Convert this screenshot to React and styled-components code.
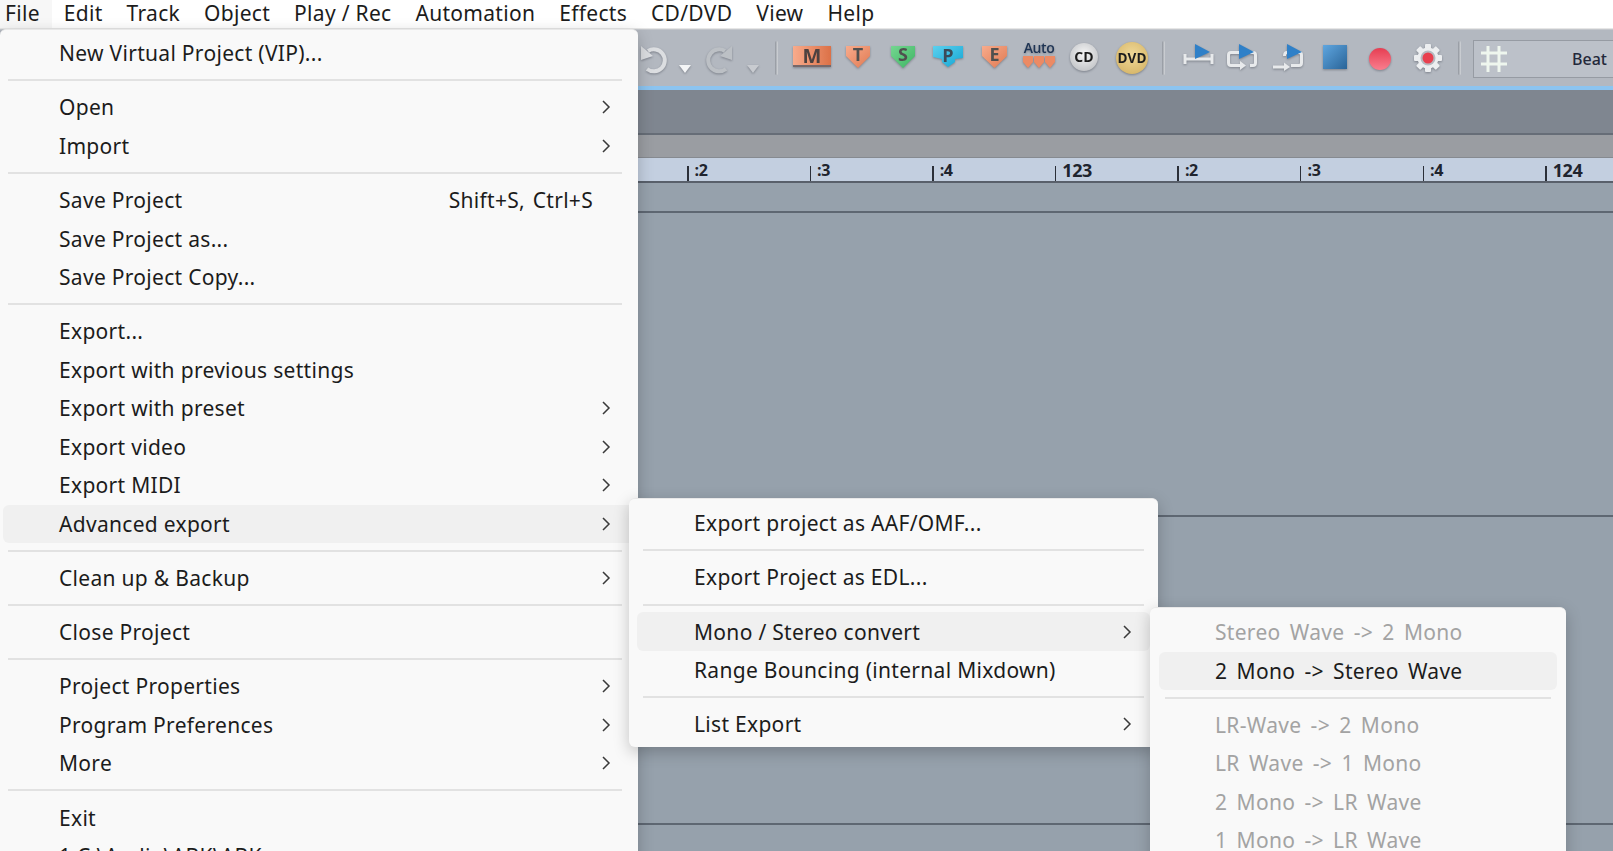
import React from 'react'
import styled, { createGlobalStyle } from 'styled-components'

const GlobalStyle = createGlobalStyle`
  html, body { margin: 0; padding: 0; background: #fff; }
  #root { height: 851px; overflow: hidden; }
`

const Page = styled.div`
  position: relative;
  width: 1613px;
  height: 851px;
  overflow: hidden;
  font-family: "Noto Sans", "Open Sans", sans-serif;
  color: #1c1c1c;
`

const MenuBar = styled.div`
  display: flex;
  height: 29px;
  background: #fff;
  border-bottom: 1px solid #e6e6e6;
  box-sizing: border-box;
`

const BarItem = styled.div`
  height: 28px;
  line-height: 26px;
  padding: 0 12px 0 ${p => (p.$open ? 5 : 12)}px;
  font-size: 21px;
  letter-spacing: 0.3px;
  background: ${p => (p.$open ? '#f7f7f7' : 'transparent')};
`

const Toolbar = styled.div`
  display: flex;
  align-items: flex-start;
  height: 57px;
  padding-left: 640px;
  background: #b3b8c0;
  border-top: 1px solid #c4c7cc;
  box-sizing: border-box;
`

// $y is the distance below the toolbar's top edge
const Tool = styled.div`
  flex: none;
  display: flex;
  margin-left: ${p => p.$ml || 0}px;
  margin-top: ${p => p.$y}px;
  filter: drop-shadow(0 1px 1px rgba(60, 65, 75, 0.45));
`

const ToolSep = styled.div`
  flex: none;
  width: 3px;
  height: 34px;
  margin-left: ${p => p.$ml}px;
  margin-top: 11px;
  border-radius: 2px;
  background: linear-gradient(90deg, #8f949c, #d4d7db);
`

const SnapBox = styled.div`
  flex: none;
  display: flex;
  align-items: center;
  justify-content: space-between;
  width: 160px;
  height: 38px;
  margin-left: 12px;
  margin-top: 10px;
  padding: 0 25px 0 6px;
  box-sizing: border-box;
  background: #bcc1c9;
  border: 1px solid #969ba3;
  font-size: 16px;
  font-weight: 500;
  color: #23283a;
`

const BlueLine = styled.div`
  height: 4px;
  background: #8cc4f0;
`

const DarkBand = styled.div`
  height: 45px;
  box-sizing: border-box;
  background: #7f8690;
  border-bottom: 2px solid #666d77;
`

const GreyBand = styled.div`
  height: 23px;
  box-sizing: border-box;
  background: #9a9da2;
  border-bottom: 1px solid #868a90;
`

const Ruler = styled.div`
  display: flex;
  height: 25px;
  padding-left: 687px;
  box-sizing: border-box;
  background: #c3cfe0;
  border-bottom: 2px solid #59606b;
`

const Bar = styled.div`
  flex: none;
  width: 122.6px;
  display: flex;
  align-items: flex-end;
`

const Tick = styled.div`
  width: 1.5px;
  height: 15px;
  background: #2b2f38;
`

const BarLabel = styled.span`
  margin-left: 6px;
  margin-bottom: -1px;
  line-height: 23px;
  font-family: "Open Sans", sans-serif;
  font-size: ${p => (p.$major ? 18 : 16)}px;
  font-weight: 700;
  letter-spacing: -0.4px;
  color: #20242e;
`

const Track = styled.div`
  height: ${p => p.$h}px;
  box-sizing: border-box;
  background: #96a1ac;
  border-bottom: 2px solid #5e6772;
`

const Menu = styled.div`
  position: absolute;
  left: ${p => p.$left}px;
  top: ${p => p.$top}px;
  width: ${p => p.$width}px;
  padding: ${p => p.$padTop}px 0 3px;
  box-sizing: border-box;
  background: #f9f9f9;
  border-radius: 6px;
  box-shadow: 0 5px 16px rgba(0, 0, 0, 0.22);
  border-top: 1px solid #e8e8e8;
  z-index: ${p => p.$z};
`

const Row = styled.div`
  display: flex;
  align-items: center;
  height: 38.5px;
  margin: 0 ${p => p.$inset}px;
  padding-left: ${p => p.$text}px;
  padding-right: ${p => p.$right}px;
  border-radius: 6px;
  font-size: 21px;
  letter-spacing: 0.3px;
  word-spacing: ${p => p.$wordGap || 0}px;
  white-space: nowrap;
  color: ${p => (p.$disabled ? '#a3a3a3' : '#1c1c1c')};
  background: ${p => (p.$active ? '#f0f0f0' : 'transparent')};
`

const RowLabel = styled.span`
  flex: 1;
`

const Shortcut = styled.span`
  margin-right: 18px;
  word-spacing: 2px;
`

const Sep = styled.div`
  height: 15.7px;
  display: flex;
  align-items: center;
  &::after {
    content: '';
    flex: 1;
    height: 2px;
    margin: 0 ${p => p.$right}px 0 ${p => p.$left}px;
    background: #e2e2e2;
  }
`

const Chevron = () => (
  <svg width="10" height="16" viewBox="0 0 10 16">
    <path d="M2 2 L8 8 L2 14" fill="none" stroke="#3a3a3a" strokeWidth="1.5" />
  </svg>
)

const Shield = ({ id, from, to, letter, w = 24 }) => (
  <svg width={w} height="23" viewBox={`0 0 ${w} 23`}>
    <defs>
      <linearGradient id={id} x1="0" y1="0" x2="1" y2="1">
        <stop offset="0" stopColor={from} />
        <stop offset="1" stopColor={to} />
      </linearGradient>
    </defs>
    <path d={`M0 1 H${w} V11 L${w / 2} 23 L0 11 Z`} fill={`url(#${id})`} />
    <text x={w / 2} y="16" textAnchor="middle" fontFamily="Open Sans" fontWeight="700" fontSize="18" fill="#50504f">{letter}</text>
  </svg>
)

const MuteIcon = () => (
  <svg width="38" height="22" viewBox="0 0 38 22">
    <defs>
      <linearGradient id="mute" x1="0" y1="0" x2="1" y2="0">
        <stop offset="0" stopColor="#f8ab8c" />
        <stop offset="1" stopColor="#dc7147" />
      </linearGradient>
    </defs>
    <rect x="0" y="1" width="38" height="20" fill="url(#mute)" />
    <rect x="0" y="20" width="38" height="2" fill="#76686a" />
    <text x="19" y="18" textAnchor="middle" fontFamily="Open Sans" fontWeight="700" fontSize="20" fill="#4b4140">M</text>
  </svg>
)

const PhaseIcon = () => (
  <svg width="30" height="22" viewBox="0 0 30 22">
    <defs>
      <linearGradient id="phase" x1="0" y1="0" x2="1" y2="1">
        <stop offset="0" stopColor="#5cd0ee" />
        <stop offset="1" stopColor="#14a6d4" />
      </linearGradient>
    </defs>
    <path d="M0 1 H30 V13 L22 14 V17 L15 22 L9 17 V14 L0 12 Z" fill="url(#phase)" />
    <text x="15" y="17" textAnchor="middle" fontFamily="Open Sans" fontWeight="700" fontSize="18" fill="#3c4b58">P</text>
  </svg>
)

const AutoIcon = () => (
  <svg width="34" height="27" viewBox="0 0 34 27">
    <text x="17" y="11" textAnchor="middle" fontFamily="Open Sans" fontWeight="600" fontSize="14" letterSpacing="-0.4" fill="#1e3454">Auto</text>
    {[1, 12, 23].map(x => (
      <path key={x} d={`M${x} 14 H${x + 10} V20 L${x + 5} 26 L${x} 20 Z`} fill="#ec8a64" />
    ))}
  </svg>
)

const Disc = ({ id, label, from, to, size, fontSize, color }) => (
  <svg width={size} height={size} viewBox={`0 0 ${size} ${size}`}>
    <defs>
      <radialGradient id={id} cx="0.5" cy="0.4" r="0.6">
        <stop offset="0" stopColor={from} />
        <stop offset="1" stopColor={to} />
      </radialGradient>
    </defs>
    <circle cx={size / 2} cy={size / 2} r={size / 2 - 1} fill={`url(#${id})`} />
    <text x={size / 2} y={size / 2 + fontSize * 0.36} textAnchor="middle" fontFamily="Open Sans" fontWeight="700" fontSize={fontSize} fill={color}>{label}</text>
  </svg>
)

const HistoryIcon = ({ flip, color }) => (
  <svg width="30" height="30" viewBox="0 0 30 30" style={flip ? { transform: 'scaleX(-1)' } : undefined}>
    <path d="M8 7 A11 11 0 1 1 7 25" fill="none" stroke={color} strokeWidth="4" />
    <path d="M1 2 L1 16 L13 12 Z" fill={color} />
  </svg>
)

const DropArrow = ({ color }) => (
  <svg width="12" height="8" viewBox="0 0 12 8">
    <path d="M0 0 H12 L6 8 Z" fill={color} />
  </svg>
)

const PlayFlag = ({ x }) => <path d={`M${x} 1 L${x + 15} 9 L${x} 16 Z`} fill="#2f80c8" />

const LoopA = () => (
  <svg width="32" height="26" viewBox="0 0 32 26">
    <path d="M2 11 V21 M2 16 H29 M29 11 V21" fill="none" stroke="#e8eaec" strokeWidth="3" />
    <PlayFlag x={12} />
  </svg>
)

const LoopB = () => (
  <svg width="32" height="28" viewBox="0 0 32 28">
    <path d="M14 9.5 H5 Q2.5 9.5 2.5 12 V20 Q2.5 22.5 5 22.5 H15 M24 9.5 H27 Q29.5 9.5 29.5 12 V20 Q29.5 22.5 27 22.5 H24" fill="none" stroke="#e8eaec" strokeWidth="3" />
    <path d="M14 18 L20 22.5 L14 27 Z" fill="#e8eaec" />
    <PlayFlag x={13} />
  </svg>
)

const LoopC = () => (
  <svg width="32" height="28" viewBox="0 0 32 28">
    <path d="M15 9.5 Q12.5 9.5 12.5 13 M26 9.5 H27 Q29.5 9.5 29.5 12 V20 Q29.5 22.5 27 22.5 H19 M1 24 H14" fill="none" stroke="#e8eaec" strokeWidth="3" />
    <path d="M12 19.5 L18 24 L12 28 Z" fill="#e8eaec" />
    <PlayFlag x={15} />
  </svg>
)

const StopIcon = () => (
  <svg width="24" height="24" viewBox="0 0 24 24">
    <defs>
      <linearGradient id="stop" x1="0" y1="0" x2="1" y2="1">
        <stop offset="0" stopColor="#5fa6e0" />
        <stop offset="1" stopColor="#2a6498" />
      </linearGradient>
    </defs>
    <rect width="24" height="24" fill="url(#stop)" />
  </svg>
)

const RecIcon = () => (
  <svg width="24" height="24" viewBox="0 0 24 24">
    <defs>
      <linearGradient id="rec" x1="0" y1="0" x2="0" y2="1">
        <stop offset="0" stopColor="#e63e52" />
        <stop offset="1" stopColor="#f97e8e" />
      </linearGradient>
    </defs>
    <circle cx="12" cy="12" r="11" fill="url(#rec)" />
  </svg>
)

const GearIcon = () => (
  <svg width="30" height="30" viewBox="0 0 30 30">
    {[0, 45, 90, 135].map(a => (
      <rect key={a} x="12" y="1" width="6" height="28" rx="1" fill="#eceef0" transform={`rotate(${a} 15 15)`} />
    ))}
    <circle cx="15" cy="15" r="10.5" fill="#eceef0" />
    <circle cx="15" cy="15" r="7.5" fill="#b5b9c0" />
    <circle cx="15" cy="15" r="5.5" fill="#e8404f" />
  </svg>
)

const GridIcon = () => (
  <svg width="28" height="28" viewBox="0 0 28 28">
    <path d="M8 1 V27 M19 1 V27 M1 8 H27 M1 19 H27" fill="none" stroke="#eef6ee" strokeWidth="3" />
  </svg>
)

const barLabels = [':2', ':3', ':4', '123', ':2', ':3', ':4', '124']

const menuBarItems = [
  { label: 'File', open: true },
  { label: 'Edit' },
  { label: 'Track' },
  { label: 'Object' },
  { label: 'Play / Rec' },
  { label: 'Automation' },
  { label: 'Effects' },
  { label: 'CD/DVD' },
  { label: 'View' },
  { label: 'Help' },
]

const fileMenu = [
  { label: 'New Virtual Project (VIP)...' },
  'sep',
  { label: 'Open', sub: true },
  { label: 'Import', sub: true },
  'sep',
  { label: 'Save Project', shortcut: 'Shift+S, Ctrl+S' },
  { label: 'Save Project as...' },
  { label: 'Save Project Copy...' },
  'sep',
  { label: 'Export...' },
  { label: 'Export with previous settings' },
  { label: 'Export with preset', sub: true },
  { label: 'Export video', sub: true },
  { label: 'Export MIDI', sub: true },
  { label: 'Advanced export', sub: true, active: true },
  'sep',
  { label: 'Clean up & Backup', sub: true },
  'sep',
  { label: 'Close Project' },
  'sep',
  { label: 'Project Properties', sub: true },
  { label: 'Program Preferences', sub: true },
  { label: 'More', sub: true },
  'sep',
  { label: 'Exit' },
  { label: '1 C:\\Audio\\ABK\\ABK' },
]

const exportMenu = [
  { label: 'Export project as AAF/OMF...' },
  'sep',
  { label: 'Export Project as EDL...' },
  'sep',
  { label: 'Mono / Stereo convert', sub: true, active: true },
  { label: 'Range Bouncing (internal Mixdown)' },
  'sep',
  { label: 'List Export', sub: true },
]

const convertMenu = [
  { label: 'Stereo Wave -> 2 Mono', disabled: true },
  { label: '2 Mono -> Stereo Wave', active: true },
  'sep',
  { label: 'LR-Wave -> 2 Mono', disabled: true },
  { label: 'LR Wave -> 1 Mono', disabled: true },
  { label: '2 Mono -> LR Wave', disabled: true },
  { label: '1 Mono -> LR Wave', disabled: true },
]

const DropMenu = ({ items, left, top, width, padTop, inset, text, right, sepLeft, sepRight, wordGap, z }) => (
  <Menu $left={left} $top={top} $width={width} $padTop={padTop} $z={z}>
    {items.map((item, i) =>
      item === 'sep' ? (
        <Sep key={i} $left={sepLeft} $right={sepRight} />
      ) : (
        <Row key={i} $inset={inset} $text={text} $right={right} $wordGap={wordGap} $active={item.active} $disabled={item.disabled}>
          <RowLabel>{item.label}</RowLabel>
          {item.shortcut && <Shortcut>{item.shortcut}</Shortcut>}
          {item.sub && <Chevron />}
        </Row>
      )
    )}
  </Menu>
)

export default function App() {
  return (
    <Page>
      <GlobalStyle />
      <MenuBar>
        {menuBarItems.map(item => (
          <BarItem key={item.label} $open={item.open}>{item.label}</BarItem>
        ))}
      </MenuBar>
      <Toolbar>
        <Tool $y={14}><HistoryIcon color="#dcdee1" /></Tool>
        <Tool $ml={9} $y={35}><DropArrow color="#f4f5f6" /></Tool>
        <Tool $ml={12} $y={14}><HistoryIcon flip color="#bcc0c5" /></Tool>
        <Tool $ml={14} $y={35}><DropArrow color="#c8cbd0" /></Tool>
        <ToolSep $ml={16} />
        <Tool $ml={15} $y={15}><MuteIcon /></Tool>
        <Tool $ml={15} $y={15}><Shield id="track" from="#f8ab8c" to="#e07a52" letter="T" /></Tool>
        <Tool $ml={21} $y={15}><Shield id="solo" from="#74d690" to="#3fb564" letter="S" /></Tool>
        <Tool $ml={18} $y={15}><PhaseIcon /></Tool>
        <Tool $ml={19} $y={15}><Shield id="env" from="#f8ab8c" to="#e07a52" letter="E" w={25} /></Tool>
        <Tool $ml={15} $y={12}><AutoIcon /></Tool>
        <Tool $ml={13} $y={12}><Disc id="cd" label="CD" from="#f6f6f6" to="#c4c6c9" size={30} fontSize={14} color="#1c1c1c" /></Tool>
        <Tool $ml={16} $y={11}><Disc id="dvd" label="DVD" from="#f0d998" to="#d8b86c" size={34} fontSize={13.5} color="#1c1c1c" /></Tool>
        <ToolSep $ml={13} />
        <Tool $ml={18} $y={13}><LoopA /></Tool>
        <Tool $ml={11} $y={13}><LoopB /></Tool>
        <Tool $ml={14} $y={13}><LoopC /></Tool>
        <Tool $ml={19} $y={15}><StopIcon /></Tool>
        <Tool $ml={21} $y={17}><RecIcon /></Tool>
        <Tool $ml={21} $y={13}><GearIcon /></Tool>
        <ToolSep $ml={15} />
        <SnapBox>
          <GridIcon />
          <span>Beat</span>
        </SnapBox>
      </Toolbar>
      <BlueLine />
      <DarkBand />
      <GreyBand />
      <Ruler>
        {barLabels.map((label, i) => (
          <Bar key={i}>
            <Tick />
            <BarLabel $major={label.length > 2}>{label}</BarLabel>
          </Bar>
        ))}
      </Ruler>
      <Track $h={30} />
      <Track $h={304} />
      <Track $h={308} />
      <Track $h={40} />

      <DropMenu items={fileMenu} left={0} top={29} width={638} padTop={4} inset={3} text={56} right={24} sepLeft={8} sepRight={16} z={1} />
      <DropMenu items={exportMenu} left={629} top={498} width={529} padTop={5} inset={8} text={57} right={18} sepLeft={14} sepRight={14} z={2} />
      <DropMenu items={convertMenu} left={1150} top={607} width={416} padTop={5} inset={9} text={56} right={20} sepLeft={15} sepRight={15} wordGap={3.5} z={3} />
    </Page>
  )
}
